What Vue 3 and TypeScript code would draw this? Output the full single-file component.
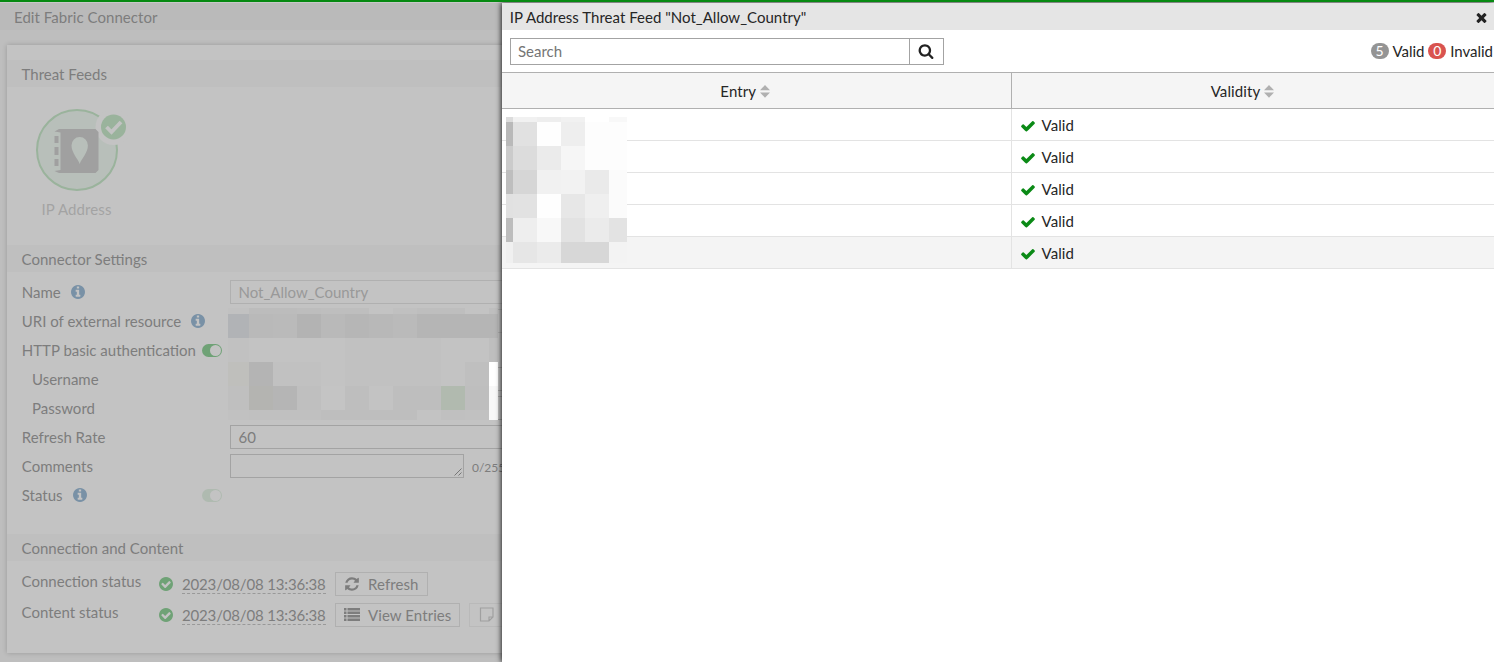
<script setup lang="ts">
interface Mosaic {
  columns: string
  rows: string
  cells: string[]
}

const ICONS = {
  check:
    'M1671 566q0 40-28 68l-724 724-136 136q-28 28-68 28t-68-28l-136-136-362-362q-28-28-28-68t28-68l136-136q28-28 68-28t68 28l294 295 656-657q28-28 68-28t68 28l136 136q28 28 28 68z',
  times:
    'M1490 1322q0 40-28 68l-136 136q-28 28-68 28t-68-28l-294-294-294 294q-28 28-68 28t-68-28l-136-136q-28-28-28-68t28-68l294-294-294-294q-28-28-28-68t28-68l136-136q28-28 68-28t68 28l294 294 294-294q28-28 68-28t68 28l136 136q28 28 28 68t-28 68l-294 294 294 294q28 28 28 68z',
  search:
    'M1216 832q0-185-131.5-316.5t-316.5-131.5-316.5 131.5-131.5 316.5 131.5 316.5 316.5 131.5 316.5-131.5 131.5-316.5zm512 832q0 52-38 90t-90 38q-54 0-90-38l-343-342q-179 124-399 124-143 0-273.5-55.5t-225-150-150-225-55.5-273.5 55.5-273.5 150-225 225-150 273.5-55.5 273.5 55.5 225 150 150 225 55.5 273.5q0 220-124 399l343 343q37 37 37 90z',
  info: 'M1152 1376v-160q0-14-9-23t-23-9h-96v-512q0-14-9-23t-23-9h-320q-14 0-23 9t-9 23v160q0 14 9 23t23 9h96v320h-96q-14 0-23 9t-9 23v160q0 14 9 23t23 9h448q14 0 23-9t9-23zm-128-896v-160q0-14-9-23t-23-9h-192q-14 0-23 9t-9 23v160q0 14 9 23t23 9h192q14 0 23-9t9-23zm640 416q0 209-103 385.5t-279.5 279.5-385.5 103-385.5-103-279.5-279.5-103-385.5 103-385.5 279.5-279.5 385.5-103 385.5 103 279.5 279.5 103 385.5z',
  checkCircle:
    'M1412 734q0-28-18-46l-91-90q-19-19-45-19t-45 19l-408 407-226-226q-19-19-45-19t-45 19l-91 90q-18 18-18 46 0 27 18 45l362 362q19 19 45 19 27 0 46-19l543-543q18-18 18-45zm252 162q0 209-103 385.5t-279.5 279.5-385.5 103-385.5-103-279.5-279.5-103-385.5 103-385.5 279.5-279.5 385.5-103 385.5 103 279.5 279.5 103 385.5z',
  refresh:
    'M1639 1056q0 5-1 7-64 268-268 434.5t-478 166.5q-146 0-282.5-55t-243.5-157l-129 129q-19 19-45 19t-45-19-19-45v-448q0-26 19-45t45-19h448q26 0 45 19t19 45-19 45l-137 137q71 66 161 102t187 36q134 0 250-65t186-179q11-17 53-117 8-23 30-23h192q13 0 22.5 9.5t9.5 22.5zm25-800v448q0 26-19 45t-45 19h-448q-26 0-45-19t-19-45 19-45l138-138q-148-137-349-137-134 0-250 65t-186 179q-11 17-53 117-8 23-30 23h-199q-13 0-22.5-9.5t-9.5-22.5v-7q65-268 270-434.5t480-166.5q146 0 284 55.5t245 156.5l130-129q19-19 45-19t45 19 19 45z',
}

const entries: string[] = ['Valid', 'Valid', 'Valid', 'Valid', 'Valid']
const columns: string[] = ['Entry', 'Validity']

// Pixelated blocks hiding sensitive values
const formMosaic: Mosaic = {
  columns: '21px repeat(10, 24px) 9px',
  rows: '6px repeat(4, 24px) 10px',
  cells: (
    'c1c1c1 bcbcbc bcbcbc bdbdbd bebebe bebebe c3c3c3 c0c0c0 bebebe bebebe c3c3c3 bebebe ' +
    'b1b3b6 b9b9b9 bababa b3b3b3 b9b9b9 b6b6b6 b8b8b8 bababa b5b5b5 b5b5b5 b5b5b5 b5b5b5 ' +
    'c1c1c1 c3c3c3 c3c3c3 c3c3c3 c3c3c3 c1c1c1 c1c1c1 c1c1c1 c1c1c1 c3c3c3 c3c3c3 bebebe ' +
    'bfbfbc b4b4b4 c1c1c1 c1c1c1 c3c3c3 c1c1c1 c1c1c1 c1c1c1 c1c1c1 c3c3c3 bfbfbf ffffff ' +
    'bfbfbf b4b4b1 b5b5b5 bfbfbf c4c4c4 bebebe c3c3c3 bebebe bebebe b1baaf bebebe f8f8f8 ' +
    'c1c1c1 c0c0c0 c0c0c0 c0c0c0 bebebe bebebe bebebe bebebe c3c3c3 c0c0c0 c1c1c1 f8f8f8'
  ).split(' '),
}

const entryMosaic: Mosaic = {
  columns: '7px repeat(4, 24px) 18px',
  rows: '5px repeat(5, 24px) 21px',
  cells: (
    'dcdcdc f1f1f1 eeeeee f1f1f1 ffffff f8f8f8 ' +
    'b9b9b9 e1e1e1 fefefe eeeeee fdfdfd fdfdfd ' +
    'cbcbcb dcdcdc ebebeb f6f6f6 fdfdfd fdfdfd ' +
    'bebebe d6d6d6 f1f1f1 f2f2f2 eaeaea fbfbfb ' +
    'e1e1e1 e2e2e2 fefefe e7e7e7 efefef fbfbfb ' +
    'bdbdbd eeeeee f8f8f8 e2e2e2 ebebeb e3e3e3 ' +
    'f0f0f0 e6e6e6 ebebeb d7d7d7 d7d7d7 f3f3f3'
  ).split(' '),
}
</script>

<template>
  <div class="screen">
    <div class="workspace">
      <main class="page">
        <h1 class="page-title">Edit Fabric Connector</h1>
        <div class="card">
          <h2 class="section">Threat Feeds</h2>
          <div class="feed">
            <svg class="feed-icon" width="96" height="86" viewBox="0 0 96 86">
              <circle cx="43" cy="43" r="40" fill="#b8bfba" stroke="#9ab39c" stroke-width="2" />
              <circle cx="79.500" cy="20" r="18" fill="#c3c3c3" />
              <circle cx="79.500" cy="20" r="12.500" fill="#9ab39c" />
              <path d="M72.500 20l5 5 9.500-10" fill="none" stroke="#c3c3c3" stroke-width="3.800" />
              <path d="M25 22h36.500l3 3v38l-3 3H25l-4.500-2 6-1V25.500l-6-1z" fill="#a0a0a0" />
              <path d="M20.500 29h4v7h-4zM20.500 40h4v8h-4zM20.500 52h4v7h-4z" fill="#a0a0a0" />
              <path d="M45.700 57c-1.500-5-8.200-11-8.200-18.500a8.200 8.500 0 0 1 16.400 0c0 7.500-6.700 13.500-8.200 18.500z" fill="#b8bfba" />
            </svg>
            <span class="feed-name">IP Address</span>
          </div>

          <h2 class="section">Connector Settings</h2>
          <div class="form">
            <div class="row">
              <label>Name</label>
              <svg class="info" viewBox="128 128 1536 1536"><path :d="ICONS.info" /></svg>
              <div class="field muted">Not_Allow_Country</div>
            </div>
            <div class="row">
              <label>URI of external resource</label>
              <svg class="info" viewBox="128 128 1536 1536"><path :d="ICONS.info" /></svg>
              <div class="field muted"></div>
            </div>
            <div class="row">
              <label>HTTP basic authentication</label>
              <span class="toggle"><i></i></span>
            </div>
            <div class="row nested">
              <label>Username</label>
              <div class="field"></div>
            </div>
            <div class="row nested">
              <label>Password</label>
              <div class="field"></div>
            </div>
            <div class="row">
              <label>Refresh Rate</label>
              <div class="field">60</div>
            </div>
            <div class="row">
              <label>Comments</label>
              <div class="field area">
                <svg width="8" height="8" viewBox="0 0 8 8">
                  <path d="M0.500 7.500l7-7M4.500 7.500l3-3" fill="none" stroke="#777" />
                </svg>
              </div>
              <span class="count">0/255</span>
            </div>
            <div class="row">
              <label>Status</label>
              <svg class="info" viewBox="128 128 1536 1536"><path :d="ICONS.info" /></svg>
              <span class="toggle off"><i></i></span>
            </div>
            <div class="mosaic form-mosaic" :style="{ gridTemplateColumns: formMosaic.columns, gridTemplateRows: formMosaic.rows }">
              <i v-for="(c, i) in formMosaic.cells" :key="i" :style="{ background: '#' + c }"></i>
            </div>
          </div>

          <h2 class="section">Connection and Content</h2>
          <div class="status-list">
            <div class="status-row">
              <label>Connection status</label>
              <svg class="ok" viewBox="128 128 1536 1536"><path :d="ICONS.checkCircle" /></svg>
              <span class="stamp">2023/08/08 13:36:38</span>
              <span class="button">
                <svg width="16" height="16" viewBox="0 0 1792 1792"><path :d="ICONS.refresh" /></svg>
                Refresh
              </span>
            </div>
            <div class="status-row">
              <label>Content status</label>
              <svg class="ok" viewBox="128 128 1536 1536"><path :d="ICONS.checkCircle" /></svg>
              <span class="stamp">2023/08/08 13:36:38</span>
              <span class="button">
                <svg width="16" height="13" viewBox="0 0 16 13">
                  <path d="M0 0h2.500v2.500H0zM3.500 0H16v2.500H3.500zM0 3.500h2.500V6H0zM3.500 3.500H16V6H3.500zM0 7h2.500v2.500H0zM3.500 7H16v2.500H3.500zM0 10.500h2.500V13H0zM3.500 10.500H16V13H3.500z" />
                </svg>
                View Entries
              </span>
              <span class="button faded">
                <svg width="15" height="15" viewBox="0 0 15 15">
                  <path d="M1.500 1h12.500v9L10 14H1.500zM14 10H10V14" fill="none" stroke="#a0a0a0" stroke-width="1.200" />
                </svg>
              </span>
            </div>
          </div>
        </div>
      </main>

      <aside class="drawer">
        <header class="drawer-title">
          <span>IP Address Threat Feed "Not_Allow_Country"</span>
          <svg width="15" height="15" viewBox="0 0 1792 1792"><path :d="ICONS.times" /></svg>
        </header>
        <div class="toolbar">
          <div class="search">
            <span class="search-text">Search</span>
            <span class="search-button">
              <svg width="16" height="16" viewBox="0 0 1792 1792"><path :d="ICONS.search" /></svg>
            </span>
          </div>
          <div class="totals">
            <b class="pill">5</b><span>Valid</span>
            <b class="pill bad">0</b><span>Invalid</span>
          </div>
        </div>
        <div class="table">
          <div class="table-row head">
            <div v-for="name in columns" :key="name" class="cell">
              <span>{{ name }}</span>
              <svg width="10" height="13" viewBox="0 0 10 13">
                <path d="M0 5.300L5 0l5 5.300zM0 7.500h10L5 12.800z" fill="#b0b0b0" />
              </svg>
            </div>
          </div>
          <div v-for="(state, i) in entries" :key="i" class="table-row" :class="{ active: i === entries.length - 1 }">
            <div class="cell"></div>
            <div class="cell">
              <svg width="16" height="16" viewBox="0 0 1792 1792"><path :d="ICONS.check" fill="#0b8a16" /></svg>
              <span>{{ state }}</span>
            </div>
          </div>
          <div class="mosaic entry-mosaic" :style="{ gridTemplateColumns: entryMosaic.columns, gridTemplateRows: entryMosaic.rows }">
            <i v-for="(c, i) in entryMosaic.cells" :key="i" :style="{ background: '#' + c }"></i>
          </div>
        </div>
      </aside>
    </div>
  </div>
</template>

<style>
body {
  margin: 0;
  overflow: hidden;
}
</style>

<style scoped>
* {
  box-sizing: border-box;
}
.screen {
  height: 662px;
  border-top: 2px solid #078a12;
  background: #c9c9c9;
  padding-top: 1px;
  font: 15px/20px Lato, 'Noto Sans', sans-serif;
  color: #7d7d7d;
  overflow: hidden;
}
.workspace {
  display: flex;
  height: 659px;
}
svg {
  flex: none;
  display: block;
}
.page {
  width: 502px;
  flex: none;
  background: #bebebe;
  overflow: hidden;
}
.page-title {
  margin: 0 0 15px;
  height: 27px;
  padding: 4px 14px;
  background: #bababa;
  font: inherit;
  letter-spacing: 0.05px;
}
.card {
  width: 800px;
  height: 608px;
  margin-left: 7px;
  padding-top: 15px;
  background: #c3c3c3;
  box-shadow: 0 0 5px rgba(0, 0, 0, 0.2);
}
.section {
  margin: 0;
  height: 27px;
  padding: 4px 14.6px;
  background: #bfbfbf;
  font: inherit;
}
.feed {
  width: 124px;
  height: 158px;
  padding: 20px 0 0 27px;
}
.feed-name {
  display: block;
  width: 85px;
  margin-top: 6px;
  text-align: center;
  letter-spacing: 0.1px;
  color: #a3a3a3;
}
.form {
  position: relative;
  height: 262px;
  padding: 5px 0 0 14.8px;
}
.row {
  display: flex;
  align-items: center;
  column-gap: 10px;
  height: 29px;
  width: 700.2px;
}
.row label {
  white-space: nowrap;
}
.nested {
  padding-left: 10.2px;
}
.info {
  width: 14px;
  height: 14px;
  fill: #7991a6;
}
.field {
  width: 492px;
  height: 24px;
  margin-left: auto;
  padding: 1px 7.500px;
  border: 1px solid #a3a3a3;
}
.field.muted {
  color: #999;
  border-color: #b0b0b0;
}
.field.area {
  display: flex;
  align-items: flex-end;
  justify-content: flex-end;
  width: 234px;
  padding: 1px;
}
.count {
  width: 250px;
  margin-left: -2px;
  padding-top: 5px;
  font-size: 12px;
}
.toggle {
  flex: none;
  width: 20px;
  height: 13px;
  margin-top: 1px;
  margin-left: -4px;
  padding: 1px;
  border-radius: 7px;
  background: #6fa276;
}
.toggle i {
  display: block;
  width: 11px;
  height: 11px;
  margin-left: 7px;
  border-radius: 50%;
  background: #c3c3c3;
}
.toggle.off {
  margin-left: 105.500px;
  background: #afbab0;
}
.mosaic {
  position: absolute;
  display: grid;
}
.form-mosaic {
  left: 221px;
  top: 36px;
}
.entry-mosaic {
  left: 4px;
  top: 45px;
}
.status-list {
  padding: 7px 0 0 14.6px;
}
.status-row {
  display: flex;
  align-items: center;
  height: 31px;
}
.status-row label {
  width: 137.400px;
  align-self: flex-start;
  padding-top: 3px;
}
.ok {
  width: 14px;
  height: 14px;
  fill: #6fa276;
}
.stamp {
  width: 144px;
  height: 20px;
  margin: 0 9px;
  border-bottom: 1px dashed #999;
  letter-spacing: -0.16px;
  white-space: nowrap;
}
.button {
  display: flex;
  align-items: center;
  gap: 8px;
  height: 24px;
  padding: 0 8px;
  margin-right: 9px;
  border: 1px solid #b0b0b0;
  letter-spacing: 0.08px;
  fill: #7d7d7d;
}
.button.faded {
  width: 90px;
  padding-left: 9px;
  border-color: #b9b9b9;
}
.drawer {
  position: relative;
  flex: 1;
  background: #fff;
  color: #262626;
  fill: #222;
  box-shadow: -1px 0 5px rgba(0, 0, 0, 0.8);
}
.drawer-title {
  display: flex;
  justify-content: space-between;
  align-items: center;
  height: 27px;
  padding: 1px 5px 0 7.700px;
  background: #e5e5e5;
  letter-spacing: 0.02px;
}
.toolbar {
  display: flex;
  justify-content: space-between;
  align-items: center;
  height: 42px;
  padding: 0 1px 0 8px;
}
.search {
  display: flex;
  width: 434px;
  height: 27px;
  border: 1px solid #a3a3a3;
}
.search-text {
  flex: 1;
  padding: 2px 7px;
  color: #757575;
}
.search-button {
  display: flex;
  align-items: center;
  width: 34px;
  padding-left: 8px;
  border-left: 1px solid #a3a3a3;
}
.totals {
  display: flex;
  align-items: center;
  gap: 3.800px;
}
.pill {
  width: 18px;
  height: 16px;
  border-radius: 8px;
  background: #949494;
  color: #fff;
  font-weight: 400;
  font-size: 14px;
  line-height: 16px;
  text-align: center;
}
.pill.bad {
  background: #d9534f;
}
.table {
  position: relative;
}
.table-row {
  display: grid;
  grid-template-columns: 510px 1fr;
  height: 32px;
  border-bottom: 1px solid #e3e3e3;
}
.cell {
  display: flex;
  align-items: center;
  padding: 1px 0 0 8px;
  gap: 5.500px;
  letter-spacing: 0.1px;
}
.cell svg {
  margin-top: 2px;
}
.cell:first-child {
  border-right: 1px solid #e3e3e3;
}
.head {
  height: 37px;
  border-top: 1px solid #b0b0b0;
  border-bottom-color: #b0b0b0;
  background: #f5f5f5;
}
.head .cell {
  justify-content: center;
  gap: 4px;
  padding: 1px 21px 0 0;
}
.head .cell svg {
  margin-top: 0;
}
.head .cell:first-child {
  border-color: #b0b0b0;
  padding-right: 22.500px;
}
.active {
  background: #f4f4f4;
}
</style>
